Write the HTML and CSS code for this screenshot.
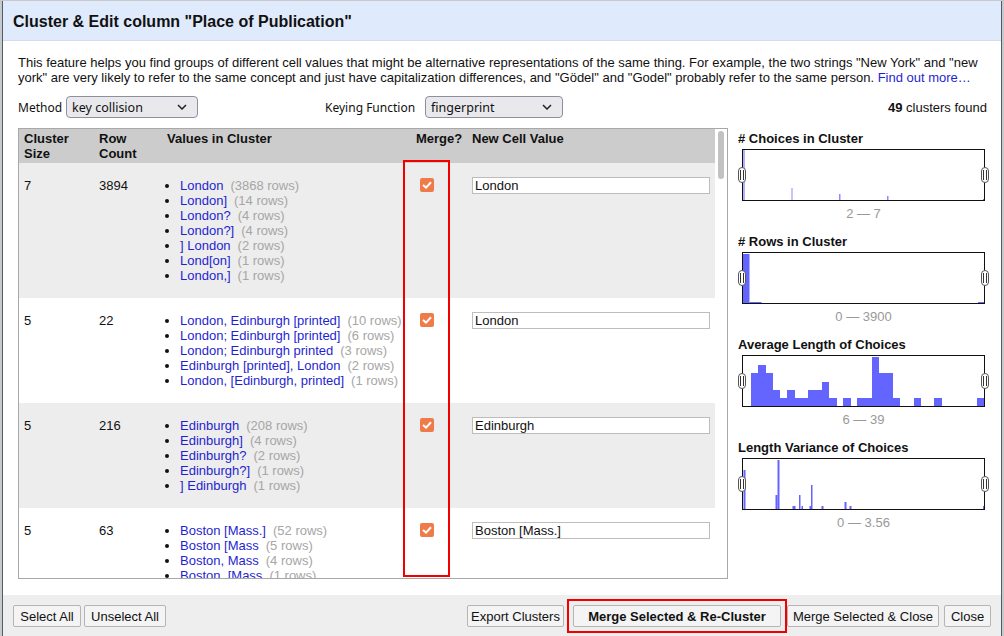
FILE: index.html
```html
<!DOCTYPE html>
<html>
<head>
<meta charset="utf-8">
<link rel="stylesheet" href="styles.css">
</head>
<body>
<div class="dialog">
  <div class="title">Cluster &amp; Edit column "Place of Publication"</div>
  <div class="body">
    <p class="desc">This feature helps you find groups of different cell values that might be alternative representations of the same thing. For example, the two strings "New York" and "new york" are very likely to refer to the same concept and just have capitalization differences, and "Gödel" and "Godel" probably refer to the same person. <a href="#">Find out more…</a></p>
    <div class="controls">
      <div class="ctl">
        <span class="lbl">Method</span>
        <div class="select sel-method"><span>key collision</span><svg width="10" height="6" viewBox="0 0 10 6"><path d="M1 1 L5 5 L9 1" fill="none" stroke="#222" stroke-width="1.5"/></svg></div>
      </div>
      <div class="ctl ctl-key">
        <span class="lbl">Keying Function</span>
        <div class="select sel-key"><span>fingerprint</span><svg width="10" height="6" viewBox="0 0 10 6"><path d="M1 1 L5 5 L9 1" fill="none" stroke="#222" stroke-width="1.5"/></svg></div>
      </div>
      <div class="found"><b>49</b> clusters found</div>
    </div>
    <div class="main">
      <div class="tablebox">
        <div class="tablescroll">
          <table>
            <colgroup><col class="c1"><col class="c2"><col class="c3"><col class="c4"><col class="c5"></colgroup>
            <thead>
              <tr><th>Cluster<br>Size</th><th>Row<br>Count</th><th>Values in Cluster</th><th>Merge?</th><th>New Cell Value</th></tr>
            </thead>
            <tbody>
              <tr class="odd">
                <td>7</td><td>3894</td>
                <td><ul>
                  <li><a href="#">London</a><span class="cnt">(3868 rows)</span></li>
                  <li><a href="#">London]</a><span class="cnt">(14 rows)</span></li>
                  <li><a href="#">London?</a><span class="cnt">(4 rows)</span></li>
                  <li><a href="#">London?]</a><span class="cnt">(4 rows)</span></li>
                  <li><a href="#">] London</a><span class="cnt">(2 rows)</span></li>
                  <li><a href="#">Lond[on]</a><span class="cnt">(1 rows)</span></li>
                  <li><a href="#">London,]</a><span class="cnt">(1 rows)</span></li>
                </ul></td>
                <td><span class="check"><svg width="10" height="8" viewBox="0 0 10 8"><path d="M1 4 L4 6.6 L9 1.2" fill="none" stroke="#fff" stroke-width="2"/></svg></span></td>
                <td><div class="inp">London</div></td>
              </tr>
              <tr>
                <td>5</td><td>22</td>
                <td><ul>
                  <li><a href="#">London, Edinburgh [printed]</a><span class="cnt">(10 rows)</span></li>
                  <li><a href="#">London; Edinburgh [printed]</a><span class="cnt">(6 rows)</span></li>
                  <li><a href="#">London; Edinburgh printed</a><span class="cnt">(3 rows)</span></li>
                  <li><a href="#">Edinburgh [printed], London</a><span class="cnt">(2 rows)</span></li>
                  <li><a href="#">London, [Edinburgh, printed]</a><span class="cnt">(1 rows)</span></li>
                </ul></td>
                <td><span class="check"><svg width="10" height="8" viewBox="0 0 10 8"><path d="M1 4 L4 6.6 L9 1.2" fill="none" stroke="#fff" stroke-width="2"/></svg></span></td>
                <td><div class="inp">London</div></td>
              </tr>
              <tr class="odd">
                <td>5</td><td>216</td>
                <td><ul>
                  <li><a href="#">Edinburgh</a><span class="cnt">(208 rows)</span></li>
                  <li><a href="#">Edinburgh]</a><span class="cnt">(4 rows)</span></li>
                  <li><a href="#">Edinburgh?</a><span class="cnt">(2 rows)</span></li>
                  <li><a href="#">Edinburgh?]</a><span class="cnt">(1 rows)</span></li>
                  <li><a href="#">] Edinburgh</a><span class="cnt">(1 rows)</span></li>
                </ul></td>
                <td><span class="check"><svg width="10" height="8" viewBox="0 0 10 8"><path d="M1 4 L4 6.6 L9 1.2" fill="none" stroke="#fff" stroke-width="2"/></svg></span></td>
                <td><div class="inp">Edinburgh</div></td>
              </tr>
              <tr>
                <td>5</td><td>63</td>
                <td><ul>
                  <li><a href="#">Boston [Mass.]</a><span class="cnt">(52 rows)</span></li>
                  <li><a href="#">Boston [Mass</a><span class="cnt">(5 rows)</span></li>
                  <li><a href="#">Boston, Mass</a><span class="cnt">(4 rows)</span></li>
                  <li><a href="#">Boston, [Mass</a><span class="cnt">(1 rows)</span></li>
                  <li><a href="#">Boston. [Mass.]</a><span class="cnt">(1 rows)</span></li>
                </ul></td>
                <td><span class="check"><svg width="10" height="8" viewBox="0 0 10 8"><path d="M1 4 L4 6.6 L9 1.2" fill="none" stroke="#fff" stroke-width="2"/></svg></span></td>
                <td><div class="inp">Boston [Mass.]</div></td>
              </tr>
            </tbody>
          </table>
        </div>
        <div class="scrollbar"><div class="thumb"></div></div>
        <div class="hl hl-merge"></div>
      </div>
      <div class="facets">
        <div class="facet">
          <div class="fh"># Choices in Cluster</div>
          <div class="hist">
            <svg width="241" height="50" viewBox="0 0 241 50">
              <rect x="0.5" y="0" width="1" height="50" fill="#6464ff"/>
              <rect x="48.5" y="38" width="1" height="12" fill="#8c8cff"/>
              <rect x="96" y="44" width="1.5" height="6" fill="#8c8cff"/>
              <rect x="144" y="46" width="1.5" height="4" fill="#8c8cff"/>
              <rect x="240" y="49" width="1" height="1" fill="#6464ff"/>
            </svg>
            <span class="handle hl-left"></span><span class="handle hl-right"></span>
          </div>
          <div class="range">2 — 7</div>
        </div>
        <div class="facet">
          <div class="fh"># Rows in Cluster</div>
          <div class="hist">
            <svg width="241" height="50" viewBox="0 0 241 50">
              <rect x="0" y="1" width="6.5" height="49" fill="#6464ff"/>
              <rect x="6.5" y="49" width="12" height="1" fill="#6464ff"/>
              <rect x="235" y="49" width="6" height="1" fill="#6464ff"/>
            </svg>
            <span class="handle hl-left"></span><span class="handle hl-right"></span>
          </div>
          <div class="range">0 — 3900</div>
        </div>
        <div class="facet">
          <div class="fh">Average Length of Choices</div>
          <div class="hist">
            <svg width="241" height="50" viewBox="0 0 241 50" shape-rendering="crispEdges">
              <g fill="#6464ff">
              <rect x="7.5" y="17" width="8" height="33"/>
              <rect x="15" y="9" width="7.5" height="41"/>
              <rect x="22.5" y="17" width="7.5" height="33"/>
              <rect x="30" y="34" width="7" height="16"/>
              <rect x="36.5" y="42" width="7" height="8"/>
              <rect x="43.5" y="34" width="8" height="16"/>
              <rect x="51" y="42" width="14" height="8"/>
              <rect x="64.5" y="34" width="14.5" height="16"/>
              <rect x="78.5" y="26" width="7.5" height="24"/>
              <rect x="86" y="42" width="7.5" height="8"/>
              <rect x="100" y="42" width="7.5" height="8"/>
              <rect x="114" y="42" width="14.5" height="8"/>
              <rect x="128.5" y="1" width="7.5" height="49"/>
              <rect x="136" y="17" width="14" height="33"/>
              <rect x="150" y="42" width="7" height="8"/>
              <rect x="170.5" y="42" width="7.5" height="8"/>
              <rect x="191" y="42" width="8" height="8"/>
              <rect x="234" y="42" width="7" height="8"/>
              </g>
            </svg>
            <span class="handle hl-left"></span><span class="handle hl-right"></span>
          </div>
          <div class="range">6 — 39</div>
        </div>
        <div class="facet">
          <div class="fh">Length Variance of Choices</div>
          <div class="hist">
            <svg width="241" height="50" viewBox="0 0 241 50">
              <g fill="#6464ff">
              <rect x="0.5" y="11" width="2" height="39"/>
              <rect x="32.5" y="36" width="2" height="14"/>
              <rect x="34.5" y="1" width="2" height="49"/>
              <rect x="49.5" y="47" width="3" height="3"/>
              <rect x="56" y="36" width="1.5" height="14"/>
              <rect x="58.5" y="47" width="1.5" height="3"/>
              <rect x="66.5" y="47" width="1.5" height="3"/>
              <rect x="68" y="26" width="1.5" height="24"/>
              <rect x="78.5" y="47" width="2" height="3"/>
              <rect x="101.5" y="43" width="2" height="7"/>
              <rect x="106.5" y="47" width="2" height="3"/>
              <rect x="240" y="47" width="1.5" height="3"/>
              </g>
            </svg>
            <span class="handle hl-left"></span><span class="handle hl-right"></span>
          </div>
          <div class="range">0 — 3.56</div>
        </div>
      </div>
    </div>
  </div>
  <div class="footer">
    <div class="left">
      <button class="btn w-sel">Select All</button>
      <button class="btn w-unsel">Unselect All</button>
    </div>
    <div class="right">
      <button class="btn w-export">Export Clusters</button>
      <span class="hlwrap"><button class="btn primary">Merge Selected &amp; Re-Cluster</button></span>
      <button class="btn w-msc">Merge Selected &amp; Close</button>
      <button class="btn w-close">Close</button>
    </div>
  </div>
</div>
</body>
</html>
```

FILE: styles.css
```css
* { box-sizing: border-box; }
html, body { margin: 0; padding: 0; }
body {
  background: #c9c9c9;
  font-family: "Liberation Sans", Arial, sans-serif;
  font-size: 13px;
  color: #111;
  width: 1004px;
  height: 636px;
  overflow: hidden;
}
.dialog {
  margin: 1px 0 0 2px;
  width: 1000px;
  height: 635px;
  background: #fff;
  border-left: 1px solid #4d5d6d;
  border-right: 1px solid #4d5d6d;
  display: flex;
  flex-direction: column;
}
.title {
  height: 40px;
  background: #dfeafc;
  font-weight: bold;
  font-size: 16px;
  padding: 11px 0 0 10px;
  line-height: 20px;
  border-bottom: 1px solid #d4dcea;
}
.body {
  flex: 1;
  padding: 14px 14px 0 15px;
}
.desc {
  margin: 0;
  line-height: 15px;
  font-size: 13px;
  width: 962px;
}
.desc a, td a {
  color: #1f1fd1;
  text-decoration: none;
}
.controls {
  margin-top: 11px;
  display: flex;
  align-items: center;
  height: 22px;
}
.ctl {
  display: flex;
  align-items: center;
  gap: 4px;
}
.ctl-key { margin-left: 127px; gap: 10px; }
.lbl {
  font-family: "Noto Sans", "DejaVu Sans", sans-serif;
  font-size: 12px;
}
.select {
  height: 22px;
  border: 1px solid #8f8f9d;
  border-radius: 4px;
  background: #e9e9ed;
  display: flex;
  align-items: center;
  justify-content: space-between;
  padding: 0 10px 0 5px;
  font-family: "Noto Sans", "DejaVu Sans", sans-serif;
  font-size: 12.5px;
  color: #111;
}
.sel-method { width: 132px; }
.sel-key { width: 138px; }
.found {
  margin-left: auto;
  padding-right: 0;
}
.main {
  margin-top: 10px;
  display: flex;
}
.tablebox {
  position: relative;
  width: 710px;
  height: 451px;
  border: 1px solid #a8a8a8;
  display: flex;
}
.tablescroll {
  width: 696px;
  height: 449px;
  overflow: hidden;
}
table {
  border-collapse: collapse;
  table-layout: fixed;
  width: 696px;
}
col.c1 { width: 74px; }
col.c2 { width: 69px; }
col.c3 { width: 248px; }
col.c4 { width: 56px; }
col.c5 { width: 249px; }
th {
  background: #cccccc;
  text-align: left;
  font-weight: bold;
  line-height: 15px;
  padding: 2px 5px 2px;
  height: 33px;
  vertical-align: top;
  white-space: nowrap;
}
th:nth-child(2), td:nth-child(2) { padding-left: 6px; }
th:nth-child(4), td:nth-child(4) { padding-left: 6px; }
th:nth-child(5), td:nth-child(5) { padding-left: 6px; }
td {
  vertical-align: top;
  padding: 15px 5px 15px;
  line-height: 15px;
}
tr.odd td { background: #ededed; }
ul {
  margin: 0;
  padding: 0 0 0 13px;
  list-style: disc;
  white-space: nowrap;
}
.cnt {
  color: #a6a6a6;
  margin-left: 7px;
}
.check {
  width: 14px;
  height: 14px;
  margin: 0 0 0 4px;
  background: #ef7b4b;
  border-radius: 2px;
  display: flex;
  align-items: center;
  justify-content: center;
}
.inp {
  height: 17px;
  border: 1px solid #bdbdbd;
  background: #fff;
  line-height: 15px;
  padding: 0 2px;
  width: 238px;
  margin-top: -1px;
}
.scrollbar {
  width: 12px;
  height: 449px;
  background: #fff;
  padding: 2px 3px;
}
.thumb {
  width: 6px;
  height: 48px;
  background: #c2c2c2;
  border-radius: 3px;
}
.hl {
  position: absolute;
  border: 2px solid #f20000;
}
.hl-merge {
  left: 384px;
  top: 31px;
  width: 47px;
  height: 417px;
}
.facets {
  margin-left: 10px;
  width: 250px;
}
.facet {
  height: 103px;
  padding-top: 3px;
}
.fh {
  font-weight: bold;
  line-height: 15px;
  white-space: nowrap;
}
.hist {
  position: relative;
  margin: 3px 0 0 4px;
  width: 243px;
  height: 52px;
  border: 1px solid #111;
}
.hist svg { display: block; }
.handle {
  position: absolute;
  top: 17px;
  width: 8px;
  height: 16px;
  border: 1px solid #555;
  border-radius: 4px;
  background: #fff;
}
.handle::before {
  content: "";
  position: absolute;
  left: 1px;
  top: 2px;
  width: 2px;
  height: 10px;
  border-left: 1px solid #333;
  border-right: 1px solid #333;
}
.hl-left { left: -5px; }
.hl-right { right: -5px; }
.range {
  margin-top: 5px;
  text-align: center;
  color: #999;
  line-height: 15px;
  padding-left: 4px;
  width: 247px;
}
.footer {
  height: 41px;
  background: #eeeeee;
  display: flex;
  align-items: flex-start;
  padding: 10px 0 0 10px;
}
.left, .right {
  display: flex;
  align-items: center;
}
.left { gap: 3px; }
.right { margin-left: 301px; }
.btn {
  font-family: "Liberation Sans", Arial, sans-serif;
  font-size: 13px;
  color: #111;
  height: 22px;
  padding: 0;
  text-align: center;
  background: #f4f4f4;
  border: 1px solid #b5b5b5;
  border-radius: 2px;
  white-space: nowrap;
}
.w-sel { width: 68px; }
.w-unsel { width: 82px; }
.w-export { width: 97px; }
.w-msc { width: 152px; margin-left: 6px; }
.w-close { width: 47px; margin-left: 5px; }
.btn.primary {
  font-weight: bold;
  width: 208px;
}
.hlwrap {
  position: relative;
  display: inline-flex;
  margin-left: 9px;
}
.hlwrap::after {
  content: "";
  position: absolute;
  left: -6px;
  right: -6px;
  top: -6px;
  bottom: -6px;
  border: 2px solid #f20000;
  pointer-events: none;
}
```
